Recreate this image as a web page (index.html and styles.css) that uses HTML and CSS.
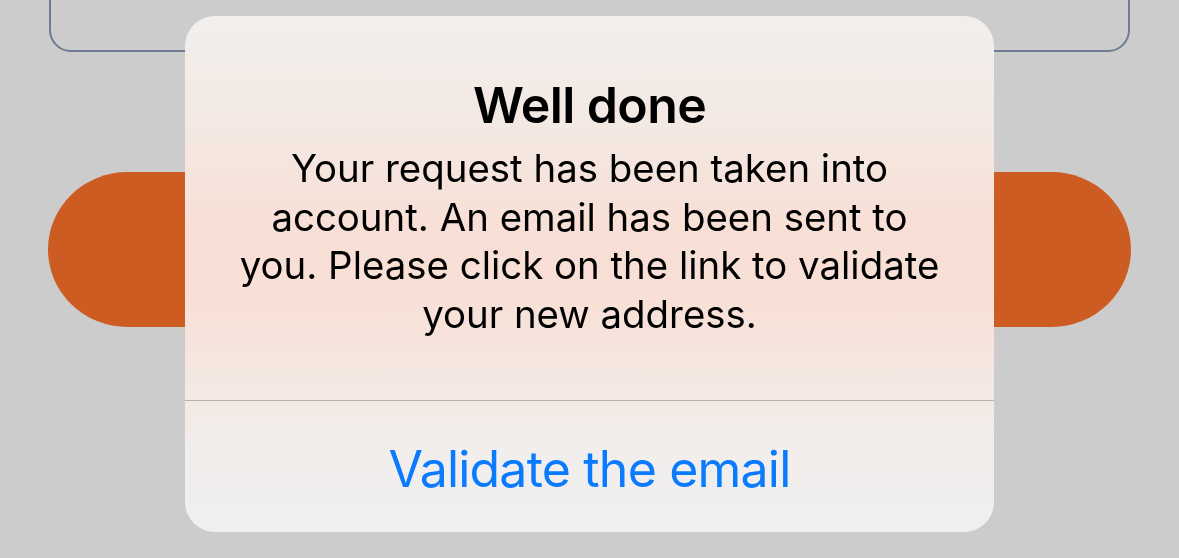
FILE: index.html
```html
<!DOCTYPE html>
<html lang="en">
<head>
    <meta charset="UTF-8">
    <meta name="viewport" content="width=device-width, initial-scale=1.0">
    <title>Change email</title>
    <link rel="stylesheet" href="styles.css">
</head>
<body>
    <main class="screen">
        <div class="field-card"></div>
        <button class="primary-btn" type="button"></button>
    </main>

    <div class="overlay">
        <div class="alert" role="alertdialog" aria-labelledby="alert-title">
            <div class="alert-body">
                <h2 id="alert-title">Well done</h2>
                <p>Your request has been taken into account. An email has been sent to you. Please click on the link to validate your new address.</p>
            </div>
            <button class="alert-action" type="button">Validate the email</button>
        </div>
    </div>
</body>
</html>
```

FILE: styles.css
```css
body {
    margin: 0;
    padding: 0;
    height: 558px;
    overflow: hidden;
    background: #cccccc;
    font-family: Inter, "Noto Sans", sans-serif;
}

.screen {
    padding: 0 48px;
}

/* card behind the dialog, its top is off screen */
.field-card {
    height: 100px;
    margin: -48px 1px 0;
    border: 2px solid #6f7b92;
    border-radius: 22px;
    box-sizing: border-box;
}

.primary-btn {
    display: block;
    width: 100%;
    height: 155px;
    margin-top: 120px;
    border: none;
    border-radius: 80px / 78px;
    background: #cc5c22;
}

.overlay {
    position: fixed;
    inset: 0;
    display: flex;
    justify-content: center;
    align-items: flex-start;
    padding-top: 16px;
}

.alert {
    width: 809px;
    height: 516px;
    border-radius: 30px;
    overflow: hidden;
    display: flex;
    flex-direction: column;
    background: linear-gradient(to bottom, #f1efed 0%, #f4e8e2 22%, #f8dfd5 42%, #f8e0d6 55%, #f4e7e1 70%, #f1eeec 84%, #f0efef 100%);
}

.alert-body {
    padding: 59px 48px 0;
    height: 325px;
    text-align: center;
    border-bottom: 1px solid #bcb0aa;
}

.alert-body h2 {
    margin: 0;
    font-size: 50px;
    line-height: 60px;
    font-weight: 600;
    letter-spacing: -0.6px;
    color: #000;
}

.alert-body p {
    margin: 9px 0 0;
    font-size: 38.4px;
    line-height: 48.5px;
    color: #000;
}

.alert-action {
    flex: 1;
    border: none;
    background: none;
    font-family: inherit;
    font-size: 50px;
    letter-spacing: -0.8px;
    color: #0a7aff;
    padding: 4px 0 0;
}
```
